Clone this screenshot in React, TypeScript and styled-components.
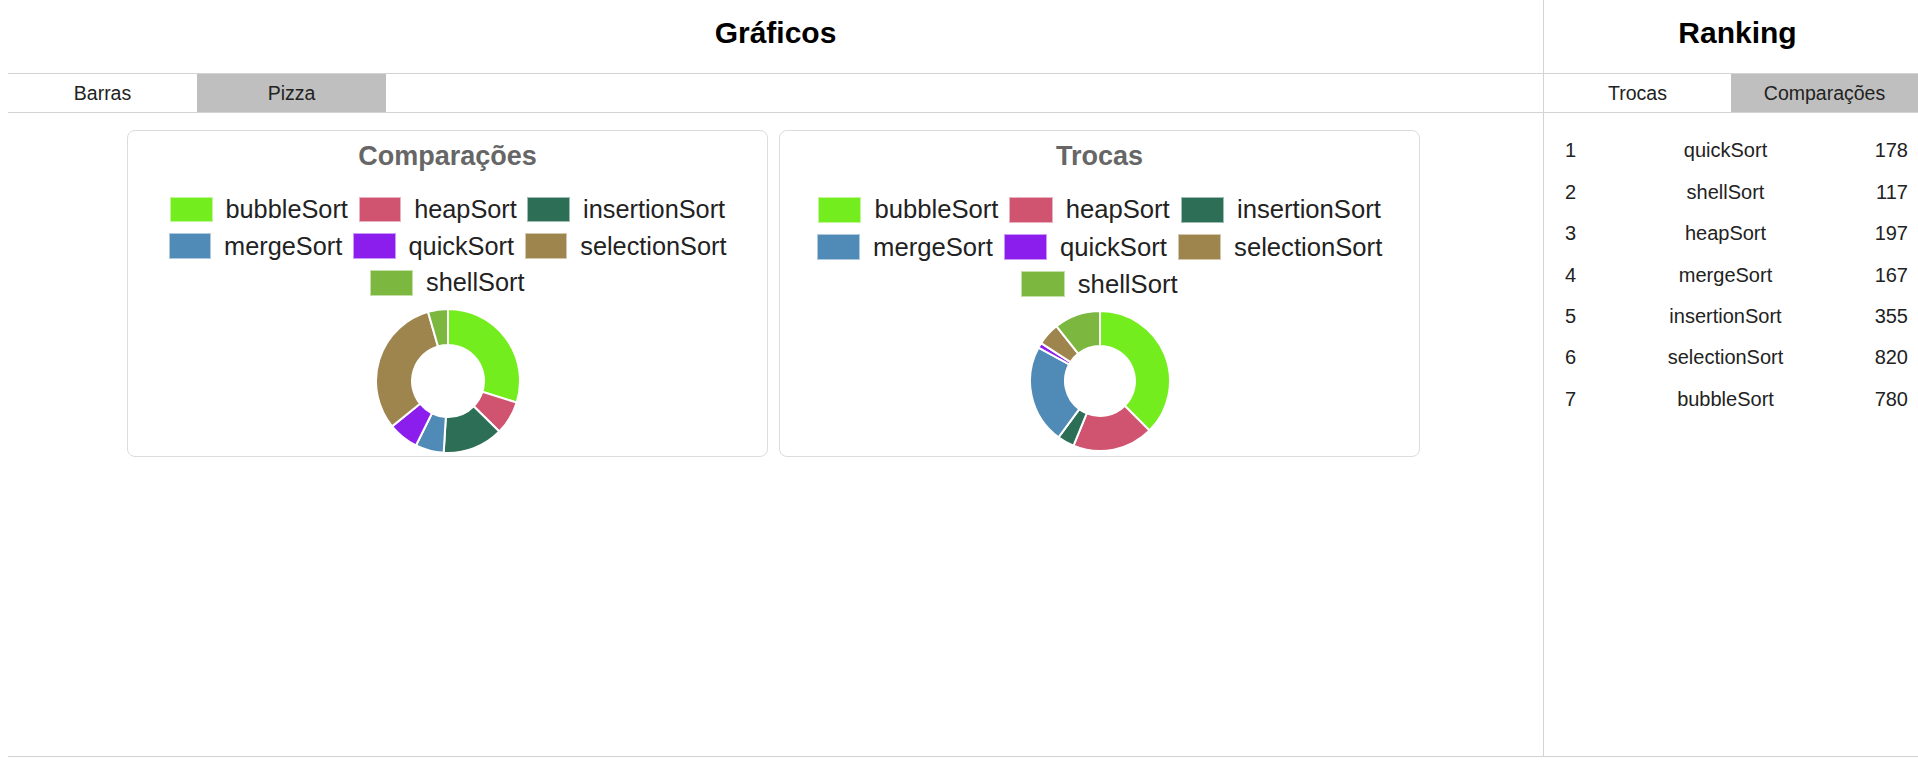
import React from "react";
import styled, { createGlobalStyle } from "styled-components";

const GlobalStyle = createGlobalStyle`
  html, body {
    margin: 0;
    padding: 0;
    background: #ffffff;
    overflow: hidden;
  }
  body {
    padding-left: 8px;
    font-family: "Liberation Sans", Arial, sans-serif;
    color: #222222;
  }
`;

const LINE = "#d3d3d3";

const Layout = styled.div`
  display: flex;
  width: 1910px;
  height: 756px;
  border-bottom: 1px solid ${LINE};
`;

const MainPanel = styled.section`
  width: 1535px;
  display: flex;
  flex-direction: column;
`;

const SidePanel = styled.aside`
  width: 374px;
  border-left: 1px solid ${LINE};
  display: flex;
  flex-direction: column;
`;

const PanelHeader = styled.header<{ $shift?: number }>`
  height: 74px;
  border-bottom: 1px solid ${LINE};
  display: flex;
  align-items: center;
  justify-content: center;
  padding-left: ${(p) => p.$shift ?? 0}px;
  padding-bottom: 7px;
  box-sizing: border-box;
`;

const PanelTitle = styled.h2`
  margin: 0;
  font-size: 30px;
  font-weight: 700;
  color: #000000;
  line-height: 34px;
`;

const TabBar = styled.nav`
  height: 38px;
  border-bottom: 1px solid ${LINE};
  display: flex;
`;

const Tab = styled.div<{ $active?: boolean; $width: string }>`
  width: ${(p) => p.$width};
  display: flex;
  align-items: center;
  justify-content: center;
  font-size: 19.5px;
  color: #222222;
  background: ${(p) => (p.$active ? "#bfbfbf" : "transparent")};
`;

const ChartsArea = styled.div`
  display: flex;
  justify-content: center;
  gap: 11px;
  padding: 17px 4px 0 0;
`;

const Card = styled.div`
  width: 639px;
  height: 315px;
  border: 1px solid #dcdcdc;
  border-radius: 8px;
  display: flex;
  flex-direction: column;
  align-items: center;
  padding-top: 10px;
  box-sizing: content-box;
`;

const ChartTitle = styled.div`
  font-size: 27px;
  line-height: 30px;
  font-weight: 700;
  color: #666666;
`;

const Legend = styled.ul<{ $k: number }>`
  list-style: none;
  margin: ${(p) => 20 * p.$k}px 0 0;
  padding: 0;
  width: 639px;
  display: flex;
  flex-wrap: wrap;
  justify-content: center;
  column-gap: ${(p) => 10.7 * p.$k}px;
`;

const LegendItem = styled.li<{ $k: number }>`
  display: flex;
  align-items: center;
  gap: ${(p) => 12.8 * p.$k}px;
  height: ${(p) => 36.7 * p.$k}px;
  font-size: ${(p) => 25.3 * p.$k}px;
  color: #222222;
  white-space: nowrap;
`;

const Swatch = styled.span<{ $color: string; $k: number }>`
  display: block;
  width: ${(p) => 42.8 * p.$k}px;
  height: ${(p) => 25.7 * p.$k}px;
  background: ${(p) => p.$color};
  box-shadow: inset 0 0 0 1px rgba(255, 255, 255, 0.55);
`;

const Donut = styled.svg`
  display: block;
  margin-top: 7px;
`;

const RankList = styled.ol`
  list-style: none;
  margin: 0;
  padding: 17px 10px 0 21px;
`;

const RankRow = styled.li`
  display: grid;
  grid-template-columns: 50px 1fr 72px;
  align-items: center;
  height: 41.45px;
  font-size: 20px;
  color: #222222;
`;

const RankPos = styled.span`
  text-align: left;
`;

const RankName = styled.span`
  text-align: center;
`;

const RankValue = styled.span`
  text-align: right;
`;

type Series = { name: string; color: string };

const SERIES: Series[] = [
  { name: "bubbleSort", color: "#74ed1f" },
  { name: "heapSort", color: "#d0546f" },
  { name: "insertionSort", color: "#2c6e56" },
  { name: "mergeSort", color: "#4f8bb6" },
  { name: "quickSort", color: "#8c1eed" },
  { name: "selectionSort", color: "#9e844d" },
  { name: "shellSort", color: "#7cb83f" },
];

const COMPARACOES = [780, 197, 355, 167, 178, 820, 117];
const TROCAS = [375, 187, 39, 228, 12, 52, 107];

const RANKING: [string, number][] = [
  ["quickSort", 178],
  ["shellSort", 117],
  ["heapSort", 197],
  ["mergeSort", 167],
  ["insertionSort", 355],
  ["selectionSort", 820],
  ["bubbleSort", 780],
];

function pt(cx: number, cy: number, r: number, deg: number) {
  const a = (deg * Math.PI) / 180;
  return [cx + r * Math.sin(a), cy - r * Math.cos(a)];
}

function slicePath(cx: number, cy: number, r0: number, r1: number, a0: number, a1: number) {
  const large = a1 - a0 > 180 ? 1 : 0;
  const [x0, y0] = pt(cx, cy, r1, a0);
  const [x1, y1] = pt(cx, cy, r1, a1);
  const [x2, y2] = pt(cx, cy, r0, a1);
  const [x3, y3] = pt(cx, cy, r0, a0);
  return `M${x0} ${y0} A${r1} ${r1} 0 ${large} 1 ${x1} ${y1} L${x2} ${y2} A${r0} ${r0} 0 ${large} 0 ${x3} ${y3} Z`;
}

function DonutChart({ values, radius }: { values: number[]; radius: number }) {
  const total = values.reduce((s, v) => s + v, 0);
  let acc = 0;
  const size = radius * 2 + 2;
  const c = size / 2;
  return (
    <Donut width={size} height={size} viewBox={`0 0 ${size} ${size}`}>
      {values.map((v, i) => {
        const a0 = (acc / total) * 360;
        acc += v;
        const a1 = (acc / total) * 360;
        return (
          <path
            key={SERIES[i].name}
            d={slicePath(c, c, radius / 2, radius, a0, a1)}
            fill={SERIES[i].color}
            stroke="#ffffff"
            strokeWidth={2}
          />
        );
      })}
    </Donut>
  );
}

function PieCard({
  title,
  values,
  k,
  radius,
}: {
  title: string;
  values: number[];
  k: number;
  radius: number;
}) {
  return (
    <Card>
      <ChartTitle>{title}</ChartTitle>
      <Legend $k={k}>
        {SERIES.map((s) => (
          <LegendItem key={s.name} $k={k}>
            <Swatch $color={s.color} $k={k} />
            {s.name}
          </LegendItem>
        ))}
      </Legend>
      <DonutChart values={values} radius={radius} />
    </Card>
  );
}

export default function App() {
  return (
    <>
      <GlobalStyle />
      <Layout>
        <MainPanel>
          <PanelHeader>
            <PanelTitle>Gráficos</PanelTitle>
          </PanelHeader>
          <TabBar>
            <Tab $width="189px">Barras</Tab>
            <Tab $width="189px" $active>
              Pizza
            </Tab>
          </TabBar>
          <ChartsArea>
            <PieCard title="Comparações" values={COMPARACOES} k={1} radius={72} />
            <PieCard title="Trocas" values={TROCAS} k={1.014} radius={70} />
          </ChartsArea>
        </MainPanel>
        <SidePanel>
          <PanelHeader $shift={13}>
            <PanelTitle>Ranking</PanelTitle>
          </PanelHeader>
          <TabBar>
            <Tab $width="50%">Trocas</Tab>
            <Tab $width="50%" $active>
              Comparações
            </Tab>
          </TabBar>
          <RankList>
            {RANKING.map(([name, value], i) => (
              <RankRow key={name}>
                <RankPos>{i + 1}</RankPos>
                <RankName>{name}</RankName>
                <RankValue>{value}</RankValue>
              </RankRow>
            ))}
          </RankList>
        </SidePanel>
      </Layout>
    </>
  );
}
